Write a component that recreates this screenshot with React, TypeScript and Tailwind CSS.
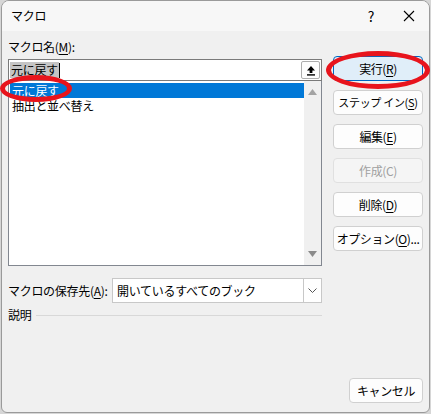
import React from "react";

const font = { fontFamily: '"Noto Sans CJK JP", "Noto Sans", sans-serif' };

function Mn({ c }: { c: string }) {
  return <span className="underline underline-offset-2">{c}</span>;
}

function Btn({
  children,
  primary,
  disabled,
  small,
}: {
  children: React.ReactNode;
  primary?: boolean;
  disabled?: boolean;
  small?: boolean;
}) {
  return (
    <button
      className={
        "h-[25px] w-full rounded-[4px] border leading-none whitespace-nowrap flex items-center justify-center " +
        (small ? "text-[11px] tracking-[-0.3px] " : "text-[12px] tracking-[-0.4px] ") +
        (primary
          ? "bg-[#e0eef9] border-[#0067c0] text-black"
          : disabled
          ? "bg-[#f5f5f5] border-[#e0e0e0] text-[#a0a0a0]"
          : "bg-[#fdfdfd] border-[#d0d0d0] text-black")
      }
    >
      {children}
    </button>
  );
}

function Ellipse({ className }: { className: string }) {
  return (
    <div
      className={
        "absolute rounded-[50%] border-[5px] border-[#e8141c] pointer-events-none " + className
      }
    />
  );
}

export default function App() {
  return (
    <div className="w-[431px] h-[414px] bg-[#d6d6d6] relative tracking-[-0.3px]" style={font}>
      <div className="absolute left-[1px] top-0 w-[429px] h-[413px] border border-[#9a9a9a] rounded-t-[8px] rounded-b-[6px] bg-[#f0f0f0] overflow-hidden flex flex-col">
        {/* Title bar */}
        <div className="h-[30px] shrink-0 bg-[#f7f7f7] flex items-center pl-[9px] text-[12px] text-black">
          <span>マクロ</span>
          <span className="ml-auto mr-[29px] text-[14px]">?</span>
          <svg width="12" height="12" viewBox="0 0 12 12" className="mr-[14px]">
            <path d="M1 1 L11 11 M11 1 L1 11" stroke="#000" strokeWidth="1.1" />
          </svg>
        </div>

        {/* Body */}
        <div className="flex flex-1 pl-[6px] pr-[6px]">
          {/* Left column */}
          <div className="w-[316px] flex flex-col">
            <div className="mt-[7px] h-[17px] text-[12px] leading-[17px] text-black">
              マクロ名(<Mn c="M" />):
            </div>
            {/* Input */}
            <div className="mt-[4px] h-[22px] border border-[#7a7a7a] bg-white flex items-center pl-[1px] pr-[1px]">
              <span className="bg-[#c4c4c4] text-[12px] leading-[16px] px-[1px] text-black">元に戻す</span>
              <span className="w-px h-[15px] bg-black" />
              <div className="ml-auto w-[19px] h-[18px] border border-[#adadad] rounded-[2px] bg-[#fdfdfd] flex items-center justify-center">
                <svg width="10" height="11" viewBox="0 0 10 11">
                  <path d="M5 1 L9 5.5 L6.4 5.5 L6.4 8 L3.6 8 L3.6 5.5 L1 5.5 Z" fill="#000" />
                  <rect x="1" y="9.2" width="8" height="1.4" fill="#000" />
                </svg>
              </div>
            </div>
            {/* List */}
            <div className="h-[185px] border border-[#828790] border-t-0 bg-white flex">
              <div className="flex-1 pt-[2px] pl-[1px] text-[12px] leading-[15px] text-black">
                <div className="h-[15px] bg-[#0078d7] text-white pl-[2px]">元に戻す</div>
                <div className="h-[15px] pl-[2px]">抽出と並べ替え</div>
              </div>
              <div className="w-[17px] bg-[#f0f0f0] flex flex-col items-center justify-between py-[8px]">
                <svg width="9" height="6" viewBox="0 0 9 6">
                  <path d="M4.5 0 L9 6 L0 6 Z" fill="#a3a3a3" />
                </svg>
                <svg width="9" height="6" viewBox="0 0 9 6">
                  <path d="M0 0 L9 0 L4.5 6 Z" fill="#8a8a8a" />
                </svg>
              </div>
            </div>
            {/* Save location */}
            <div className="mt-[12px] flex items-center">
              <span className="w-[104px] text-[12px] text-black whitespace-nowrap">
                マクロの保存先(<Mn c="A" />):
              </span>
              <div className="flex-1 h-[25px] border border-[#c8c8c8] bg-white flex items-center pl-[4px]">
                <span className="text-[12px] text-black">開いているすべてのブック</span>
                <div className="ml-auto w-[18px] h-[23px] border-l border-[#c8c8c8] flex items-center justify-center">
                  <svg width="9" height="5" viewBox="0 0 9 5">
                    <path d="M0.5 0.5 L4.5 4.5 L8.5 0.5" stroke="#555" strokeWidth="1" fill="none" />
                  </svg>
                </div>
              </div>
            </div>
            {/* Description */}
            <div className="mt-[3px] flex items-center">
              <span className="text-[12px] text-black">説明</span>
              <div className="flex-1 ml-[5px] h-px bg-[#d8d8d8]" />
            </div>
          </div>

          {/* Right column */}
          <div className="ml-[11px] w-[90px] flex flex-col pt-[25px] gap-[9px]">
            <Btn primary>
              実行(<Mn c="R" />)
            </Btn>
            <Btn small>
              ステップ イン(<Mn c="S" />)
            </Btn>
            <Btn>
              編集(<Mn c="E" />)
            </Btn>
            <Btn disabled>作成(C)</Btn>
            <Btn>
              削除(<Mn c="D" />)
            </Btn>
            <Btn>
              オプション(<Mn c="O" />)...
            </Btn>
            <div className="mt-auto mb-[9px] ml-[16px] w-[74px]">
              <Btn>キャンセル</Btn>
            </div>
          </div>
        </div>
      </div>

      {/* Red annotation ellipses */}
      <Ellipse className="left-[326px] top-[51px] w-[104px] h-[38px]" />
      <Ellipse className="left-[0px] top-[75px] w-[72px] h-[27px]" />
    </div>
  );
}
